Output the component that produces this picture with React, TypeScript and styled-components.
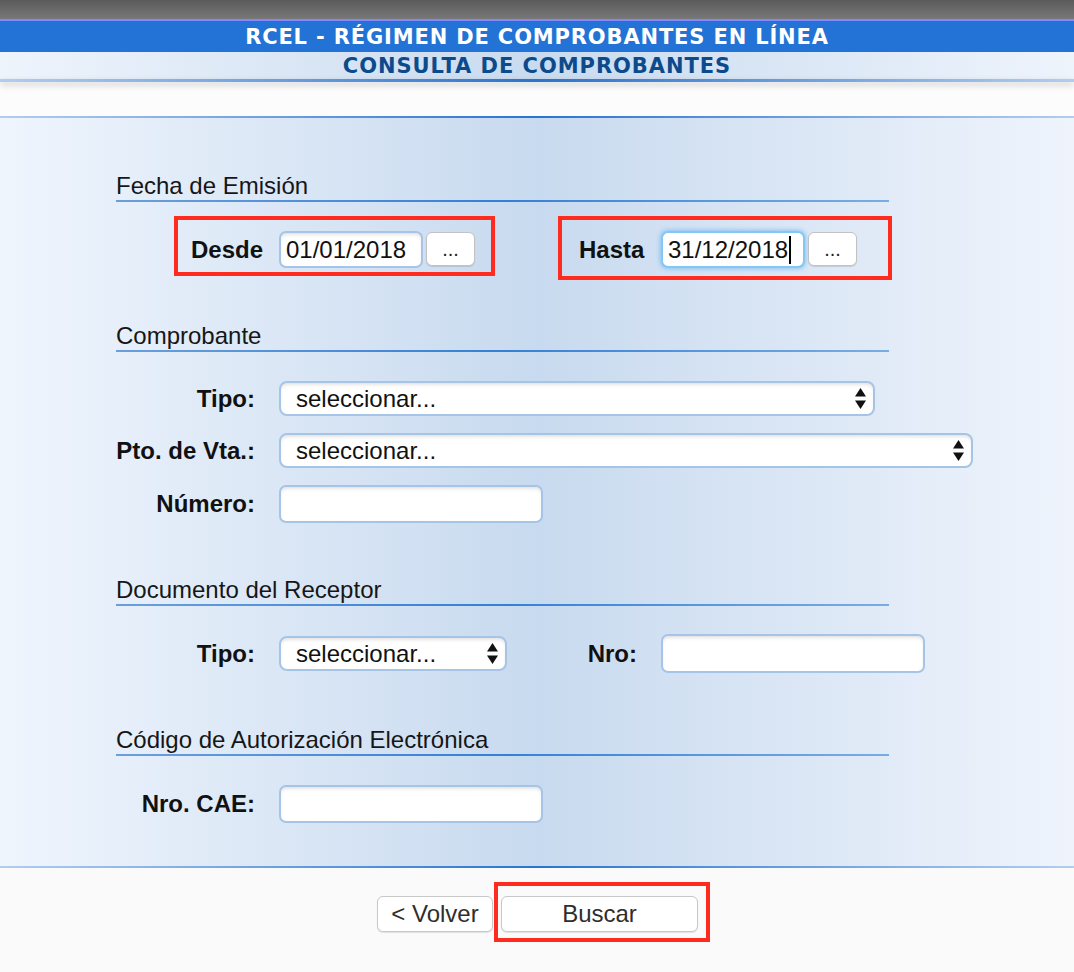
import React from "react";
import styled, { createGlobalStyle } from "styled-components";

const Global = createGlobalStyle`
  html, body { margin: 0; padding: 0; background: #fafafa; }
  body { font-family: "Liberation Sans", Arial, sans-serif; }
  * { box-sizing: border-box; }
`;

const Page = styled.div`
  display: flex;
  flex-direction: column;
  width: 1074px;
  min-height: 972px;
  background: #fafafa;
`;

const TopBar = styled.div`
  height: 19px;
  background: linear-gradient(#5b5b5b, #787878);
`;

const TitleBand = styled.div`
  height: 33px;
  border-top: 2px solid #8289ff;
  background: #2273d5;
  display: flex;
  align-items: center;
  justify-content: center;
  padding-top: 1px;
  color: #ffffff;
  font-family: "DejaVu Sans", Verdana, sans-serif;
  font-weight: bold;
  font-size: 21px;
  letter-spacing: 0.85px;
`;

const SubBand = styled.div`
  height: 27px;
  background: linear-gradient(90deg, #eef4fc 0%, #c9dbf0 50%, #eef4fc 100%);
  display: flex;
  align-items: center;
  justify-content: center;
  color: #0d4a8b;
  font-family: "DejaVu Sans", Verdana, sans-serif;
  font-weight: bold;
  font-size: 21px;
  letter-spacing: 0.95px;
`;

const Rule = styled.div<{ $shadow?: boolean }>`
  height: ${(p) => (p.$shadow ? 3 : 2)}px;
  background: linear-gradient(90deg, #b2cdee 0%, #2a74cf 50%, #b2cdee 100%);
  box-shadow: ${(p) => (p.$shadow ? "0 3px 6px rgba(0,0,0,0.22)" : "none")};
  position: relative;
  z-index: 1;
`;

const WhiteGap = styled.div`
  height: 34px;
  background: #fcfcfc;
`;

const FormPanel = styled.div`
  background: linear-gradient(90deg, #eff5fd 0%, #c8daef 50%, #eff4fc 100%);
  padding: 54px 0 43px 116px;
  display: flex;
  flex-direction: column;
`;

const SectionTitle = styled.div<{ $mt: number }>`
  width: 773px;
  margin-top: ${(p) => p.$mt}px;
  font-size: 24px;
  line-height: 28px;
  color: #161616;
  border-bottom: 2px solid transparent;
  border-image: linear-gradient(90deg, #6a9fdc 0%, #3580d4 50%, #78ade2 100%) 1;
`;

const DateRow = styled.div`
  display: flex;
  align-items: flex-start;
  margin-top: 14px;
  padding-left: 58px;
  gap: 63px;
`;

const Highlight = styled.div<{ $w: number; $h: number; $pl: number }>`
  width: ${(p) => p.$w}px;
  height: ${(p) => p.$h}px;
  border: 4px solid #ff2b1f;
  padding: 11px 0 0 ${(p) => p.$pl}px;
  display: flex;
  align-items: flex-start;
`;

const DateLabel = styled.label<{ $w: number }>`
  width: ${(p) => p.$w}px;
  height: 37px;
  display: flex;
  align-items: center;
  font-weight: bold;
  font-size: 24px;
  color: #111;
`;

const Field = styled.input<{ $w: number; $h: number }>`
  width: ${(p) => p.$w}px;
  height: ${(p) => p.$h}px;
  border: 2px solid #a6c4e5;
  border-radius: 7px;
  background: #fff;
  box-shadow: inset 0 3px 4px -2px rgba(0, 0, 0, 0.16);
  padding: 0 0 0 5px;
  font-family: "Liberation Sans", Arial, sans-serif;
  font-size: 24px;
  color: #111;
  outline: none;
`;

const FocusField = styled.div`
  width: 144px;
  height: 37px;
  border: 2px solid #84c7f3;
  border-radius: 7px;
  background: #fff;
  box-shadow: 0 0 4px 1px rgba(110, 185, 245, 0.75);
  padding-left: 5px;
  display: flex;
  align-items: center;
  font-size: 24px;
  color: #111;
`;

const Caret = styled.span`
  display: inline-block;
  width: 2px;
  height: 28px;
  background: #000;
  margin-left: 1px;
`;

const DotsButton = styled.button`
  width: 49px;
  height: 34px;
  margin: 1px 0 0 3px;
  border: 1px solid #c2c2c2;
  border-radius: 6px;
  background: #fff;
  box-shadow: 0 1px 1px rgba(0, 0, 0, 0.12);
  font-family: "Liberation Sans", Arial, sans-serif;
  font-size: 20px;
  color: #222;
  padding: 0;
  display: flex;
  align-items: center;
  justify-content: center;
`;

const FieldRow = styled.div<{ $mt: number; $h: number }>`
  display: flex;
  align-items: center;
  height: ${(p) => p.$h}px;
  margin-top: ${(p) => p.$mt}px;
`;

const RowLabel = styled.label<{ $w: number }>`
  width: ${(p) => p.$w}px;
  margin-right: 24px;
  text-align: right;
  font-weight: bold;
  font-size: 24px;
  color: #111;
  white-space: nowrap;
`;

const SelectWrap = styled.div<{ $w: number }>`
  position: relative;
  width: ${(p) => p.$w}px;
  height: 35px;
`;

const Select = styled.select`
  appearance: none;
  -webkit-appearance: none;
  width: 100%;
  height: 100%;
  border: 2px solid #a6c4e5;
  border-radius: 8px;
  background: #fff;
  box-shadow: inset 0 3px 4px -2px rgba(0, 0, 0, 0.16);
  padding: 0 30px 0 15px;
  font-family: "Liberation Sans", Arial, sans-serif;
  font-size: 24px;
  color: #111;
  outline: none;
`;

const Arrows = styled.svg`
  position: absolute;
  right: 9px;
  top: 7px;
  pointer-events: none;
`;

const Footer = styled.div`
  display: flex;
  align-items: flex-start;
  padding: 14px 0 0 377px;
  height: 104px;
  background: #fafafa;
`;

const PushButton = styled.button<{ $w: number }>`
  width: ${(p) => p.$w}px;
  height: 36px;
  border: 1px solid #c8c8c8;
  border-radius: 6px;
  background: #fff;
  box-shadow: 0 1px 1px rgba(0, 0, 0, 0.1);
  font-family: "Liberation Sans", Arial, sans-serif;
  font-size: 24px;
  color: #2e2e2e;
  padding: 0;
`;

const BackButton = styled(PushButton)`
  margin-top: 14px;
`;

const ButtonHighlight = styled.div`
  width: 216px;
  height: 60px;
  margin-left: 1px;
  border: 4px solid #ff2b1f;
  padding: 10px 0 0 3px;
`;

const SelectArrows = () => (
  <Arrows width="11" height="21" viewBox="0 0 11 21">
    <polygon points="0,8.5 5.5,0 11,8.5" fill="#111" />
    <polygon points="0,12.5 11,12.5 5.5,21" fill="#111" />
  </Arrows>
);

const Dropdown = ({ w }: { w: number }) => (
  <SelectWrap $w={w}>
    <Select defaultValue="">
      <option value="">seleccionar...</option>
    </Select>
    <SelectArrows />
  </SelectWrap>
);

export default function App() {
  return (
    <Page>
      <Global />
      <TopBar />
      <TitleBand>RCEL - RÉGIMEN DE COMPROBANTES EN LÍNEA</TitleBand>
      <SubBand>CONSULTA DE COMPROBANTES</SubBand>
      <Rule $shadow />
      <WhiteGap />
      <Rule />
      <FormPanel>
        <SectionTitle $mt={0}>Fecha de Emisión</SectionTitle>
        <DateRow>
          <Highlight $w={321} $h={60} $pl={13}>
            <DateLabel $w={88}>Desde</DateLabel>
            <Field $w={144} $h={37} defaultValue="01/01/2018" />
            <DotsButton>...</DotsButton>
          </Highlight>
          <Highlight $w={334} $h={64} $pl={17}>
            <DateLabel $w={82}>Hasta</DateLabel>
            <FocusField>
              31/12/2018
              <Caret />
            </FocusField>
            <DotsButton>...</DotsButton>
          </Highlight>
        </DateRow>

        <SectionTitle $mt={42}>Comprobante</SectionTitle>
        <FieldRow $mt={29} $h={35}>
          <RowLabel $w={139}>Tipo:</RowLabel>
          <Dropdown w={596} />
        </FieldRow>
        <FieldRow $mt={17} $h={35}>
          <RowLabel $w={139}>Pto. de Vta.:</RowLabel>
          <Dropdown w={694} />
        </FieldRow>
        <FieldRow $mt={17} $h={38}>
          <RowLabel $w={139}>Número:</RowLabel>
          <Field $w={264} $h={38} />
        </FieldRow>

        <SectionTitle $mt={53}>Documento del Receptor</SectionTitle>
        <FieldRow $mt={28} $h={39}>
          <RowLabel $w={139}>Tipo:</RowLabel>
          <Dropdown w={228} />
          <RowLabel $w={130}>Nro:</RowLabel>
          <Field $w={264} $h={39} />
        </FieldRow>

        <SectionTitle $mt={53}>Código de Autorización Electrónica</SectionTitle>
        <FieldRow $mt={29} $h={38}>
          <RowLabel $w={139}>Nro. CAE:</RowLabel>
          <Field $w={264} $h={38} />
        </FieldRow>
      </FormPanel>
      <Rule />
      <Footer>
        <BackButton $w={116}>&lt; Volver</BackButton>
        <ButtonHighlight>
          <PushButton $w={197}>Buscar</PushButton>
        </ButtonHighlight>
      </Footer>
    </Page>
  );
}
